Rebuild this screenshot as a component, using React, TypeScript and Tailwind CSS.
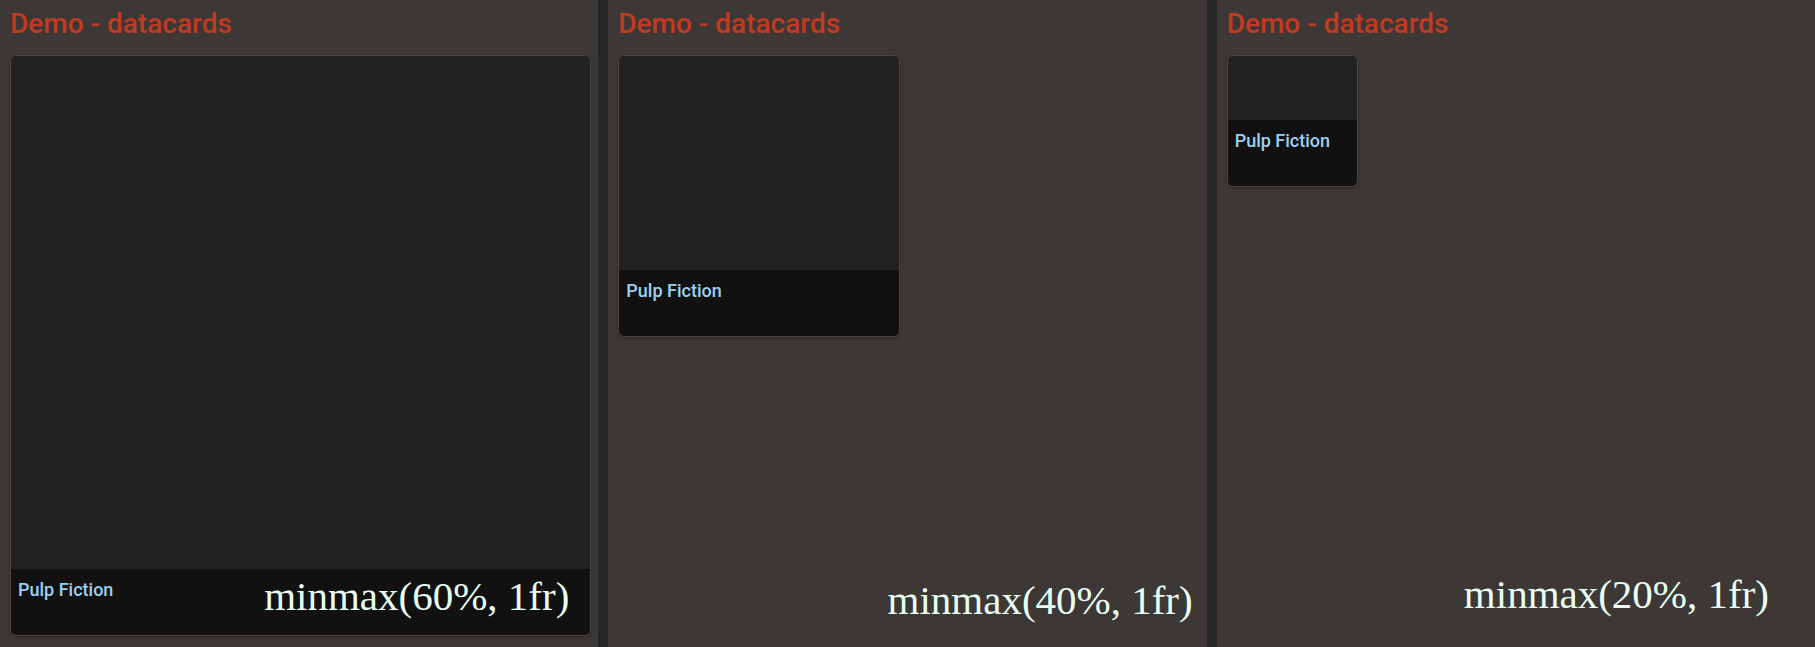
import React from 'react';

interface PanelProps {
  cols: string;
  label: string;
  labelPos: string;
}

function DataCard() {
  return (
    <div className="aspect-square flex flex-col rounded-md overflow-hidden border border-[#4a4541] shadow-[0_1px_3px_rgba(0,0,0,0.35)]">
      <div className="flex-1 bg-[#212121]" />
      <div className="h-[66px] bg-[#111111] px-[7px] pt-[9px]">
        <span className="text-[18px] font-medium leading-6 text-[#9ed0f2] font-['Roboto',sans-serif]">
          Pulp Fiction
        </span>
      </div>
    </div>
  );
}

function Panel({ cols, label, labelPos }: PanelProps) {
  return (
    <section className="relative flex-1 bg-[#3d3835] pl-[10px] pr-[7px]">
      <h1 className="pt-[6px] text-[28px] font-medium leading-[35px] text-[#c13b23] font-['Roboto',sans-serif]">
        Demo - datacards
      </h1>
      <div className={`mt-[14px] grid gap-[18px] ${cols}`}>
        <DataCard />
      </div>
      <div
        className={`absolute ${labelPos} text-[41px] leading-[41px] text-[#e9fff3] font-['Liberation_Serif',serif] whitespace-nowrap`}
      >
        {label}
      </div>
    </section>
  );
}

export default function App() {
  return (
    <div className="flex w-[1815px] h-[647px] gap-[10px] bg-[#262626]">
      <Panel cols="grid-cols-1" label="minmax(60%, 1fr)" labelPos="right-[29px] top-[576px]" />
      <Panel cols="grid-cols-2" label="minmax(40%, 1fr)" labelPos="right-[14px] top-[580px]" />
      <Panel cols="grid-cols-4" label="minmax(20%, 1fr)" labelPos="right-[46px] top-[574px]" />
    </div>
  );
}
